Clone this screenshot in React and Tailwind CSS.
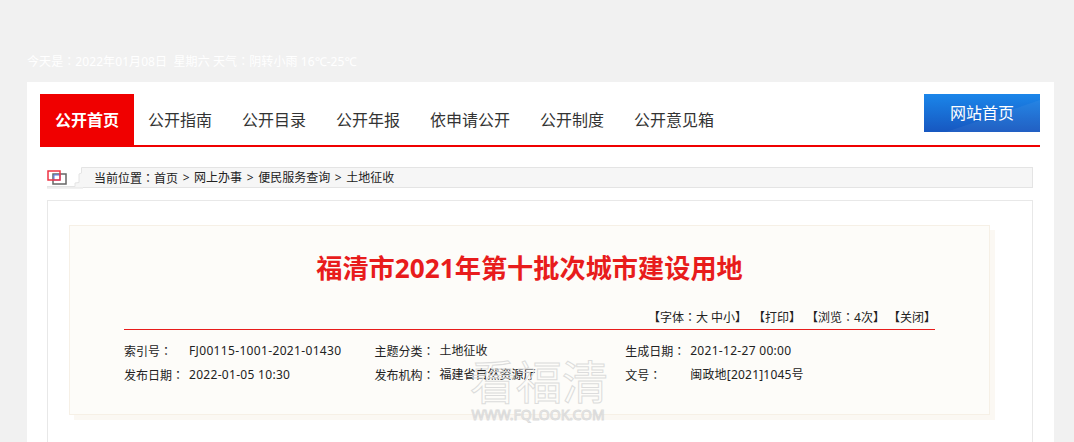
const NAV = ["公开指南", "公开目录", "公开年报", "依申请公开", "公开制度", "公开意见箱"];

const font = "font-['Noto_Sans','Noto_Sans_CJK_SC',sans-serif]";

// the reference's full-width colon sits centred, as in the TC face
function Colon() {
  return <span className="font-['Noto_Sans_CJK_TC',sans-serif]">：</span>;
}

function MetaRow({ items }) {
  return (
    <div className="flex h-[24px] items-center text-[12px] leading-[24px] text-[#222]">
      {items.map(([label, value, spacing]) => (
        <div key={label} className="flex w-[250.6px]">
          <span className="w-[65px]">{label}<Colon /></span>
          <span className={spacing}>{value}</span>
        </div>
      ))}
    </div>
  );
}

export default function App() {
  return (
    <div className={`relative h-[442px] overflow-hidden bg-[#f1f1f1] ${font}`}>
      {/* weather line */}
      <div className="h-[82px] px-[27px] pt-[52px] text-[12px] leading-[18px] tracking-[0.08px] text-white">
        今天是<Colon />2022年01月08日&nbsp; 星期六 天气<Colon />阴转小雨 16℃-25℃
      </div>

      <div className="ml-[27px] mr-[20px] h-[360px] bg-white pl-[13px] pr-[14px] pt-[12px]">
        {/* nav */}
        <div className="flex h-[53px] items-start border-b-2 border-[#f00000]">
          <div className="flex h-[51px] w-[94px] items-center justify-center bg-[#f00000] text-[16px] font-bold text-white">
            公开首页
          </div>
          <div className="ml-[14px] flex h-[51px] items-center gap-[30px] pt-[1px] text-[16px] text-[#333]">
            {NAV.map((n) => (
              <span key={n}>{n}</span>
            ))}
          </div>
          <div className="relative ml-auto flex h-[38px] w-[116px] items-center justify-center overflow-hidden bg-gradient-to-b from-[#1b86ea] to-[#1757c0] text-[16px] text-white">
            <svg className="absolute inset-0" width="116" height="38" viewBox="0 0 116 38">
              <path d="M116 6L22 38H116Z" fill="#fff" fillOpacity="0.05" />
            </svg>
            <span className="relative">网站首页</span>
          </div>
        </div>

        {/* breadcrumb */}
        <div className="relative mx-[7px] mt-[20px] flex h-[21px] items-center border border-[#e4e4e4] bg-[#f6f6f6] pl-[46px] pt-[1px] text-[12px] text-[#222]">
          <div className="absolute -left-[1px] -top-[1px] h-[21px] w-[36px] bg-white" />
          <svg className="absolute -left-[1px] -top-[1px]" width="36" height="22" viewBox="0 0 36 22" fill="none">
            <path d="M36 0.5H34.5V6L32 7V15.5L28 16V19.5H0V21H36" stroke="#e4e4e4" fill="#f6f6f6" />
            <rect x="6" y="7" width="13" height="10" stroke="#666" strokeWidth="1.5" />
            <rect x="7" y="8" width="6" height="5" stroke="#5577ee" strokeWidth="1" />
            <rect x="1" y="4" width="12" height="9" stroke="#ee3344" strokeWidth="1.5" />
          </svg>
          <span className="relative flex gap-[4.6px]">
            <span>当前位置<Colon />首页</span>
            <span>&gt;</span>
            <span>网上办事</span>
            <span>&gt;</span>
            <span>便民服务查询</span>
            <span>&gt;</span>
            <span>土地征收</span>
          </span>
        </div>

        {/* card */}
        <div className="mx-[7px] mt-[12px] h-[260px] border border-[#e8e8e8] px-[21px] pt-[24px]">
          <div className="h-[190px] w-[921px] border border-[#f6f0e6] bg-[#fdfcf9] px-[54px] shadow-[5px_5px_0_#fbf8f3]">
            <h1 className="pt-[23px] text-center text-[26.2px] font-bold leading-[38px] text-[#e81c1c]">
              福清市2021年第十批次城市建设用地
            </h1>
            <div className="mt-[17px] flex h-[26px] items-center justify-end border-b border-[#e81c1c] pt-[2px] text-[12px] text-[#222]">
              <span>【字体<Colon />大 中小】</span>
              <span className="ml-[6px]">【打印】</span>
              <span className="ml-[5px]">【浏览<Colon />4次】</span>
              <span className="-mr-[1px] ml-[3px]">【关闭】</span>
            </div>
            <div className="pt-[9px]">
              <MetaRow items={[["索引号", "FJ00115-1001-2021-01430", "tracking-[0.34px]"], ["主题分类", "土地征收"], ["生成日期", "2021-12-27 00:00", "tracking-[0.3px]"]]} />
              <MetaRow items={[["发布日期", "2022-01-05 10:30", "tracking-[0.3px]"], ["发布机构", "福建省自然资源厅"], ["文号", "闽政地[2021]1045号", "tracking-[0.2px]"]]} />
            </div>
          </div>
        </div>
      </div>

      {/* watermark */}
      <div className="pointer-events-none absolute left-[470px] top-[355px] w-[136px] text-center text-transparent [-webkit-text-stroke:1px_#dcdcdc]">
        <div className="whitespace-nowrap text-[46px] leading-[52px]">看福清</div>
        <div className="whitespace-nowrap text-[14px] leading-[16px]">WWW.FQLOOK.COM</div>
      </div>
    </div>
  );
}
